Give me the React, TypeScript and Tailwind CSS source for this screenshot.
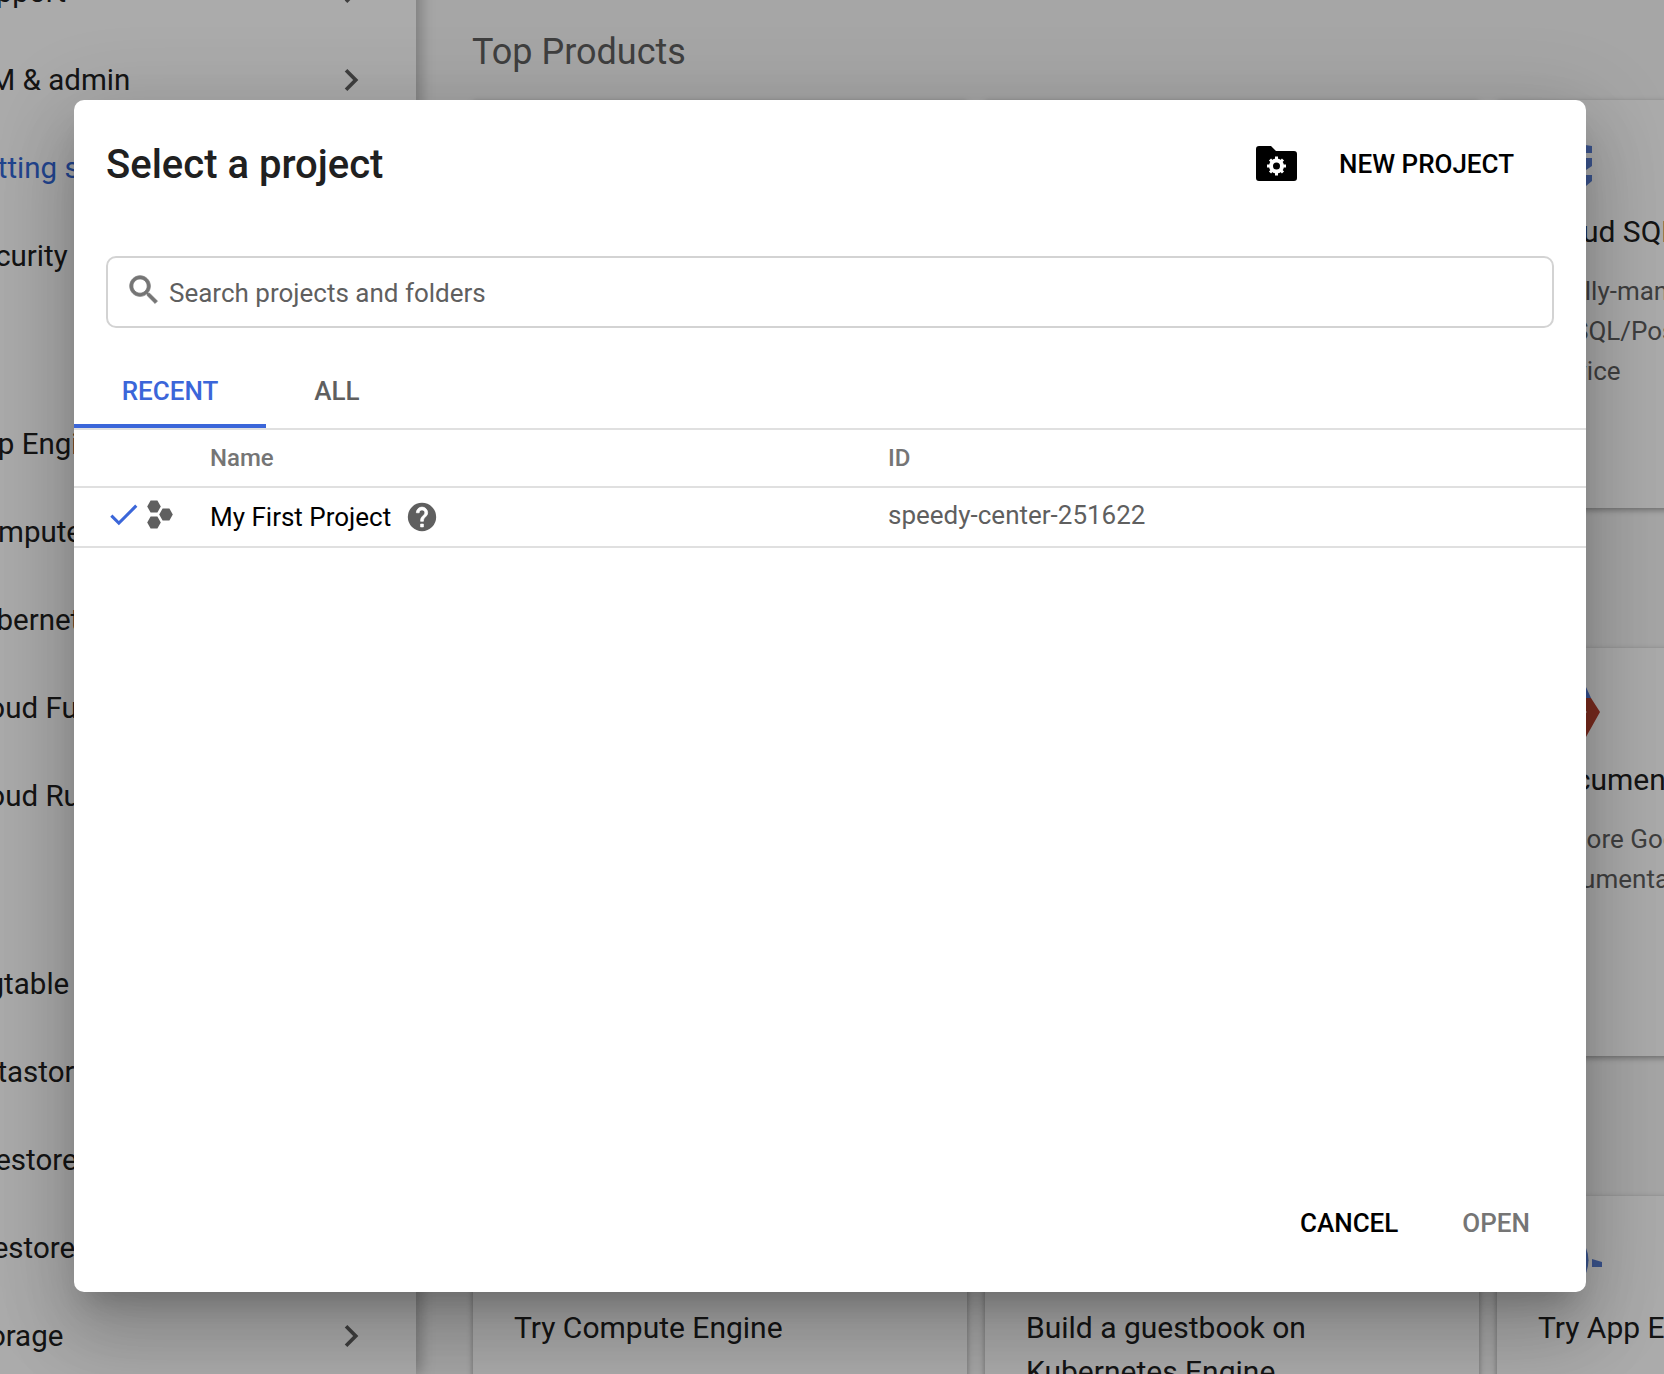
type Item = { label: string; active?: boolean; chevron?: boolean };

const sections: Item[][] = [
  [
    { label: "Support", chevron: true },
    { label: "IAM & admin", chevron: true },
    { label: "Getting started", active: true },
    { label: "Security", chevron: true },
  ],
  [
    { label: "App Engine", chevron: true },
    { label: "Compute Engine", chevron: true },
    { label: "Kubernetes Engine", chevron: true },
    { label: "Cloud Functions" },
    { label: "Cloud Run" },
  ],
  [
    { label: "Bigtable" },
    { label: "Datastore", chevron: true },
    { label: "Firestore", chevron: true },
    { label: "Filestore" },
    { label: "Storage", chevron: true },
  ],
];

function Chevron() {
  return (
    <svg viewBox="0 0 24 24" className="w-[44px] h-[44px] -mt-[1px] fill-[#5f5f5f]">
      <path d="M10 6L8.59 7.41 13.17 12l-4.58 4.59L10 18l6-6z" />
    </svg>
  );
}

function SqlIcon() {
  return (
    <svg viewBox="0 0 54 44" className="w-[54px] h-[44px]">
      <path d="M0 8L27 0l27 4v7H0z" fill="#5a7fd6" />
      <path d="M0 16h54v8l-6 4H0z" fill="#5a7fd6" />
      <path d="M0 33h54v6l-6 5H0z" fill="#5a7fd6" />
    </svg>
  );
}

function DocsIcon() {
  return (
    <svg viewBox="0 0 62 50" className="w-[62px] h-[50px]">
      <path d="M40 11L48 0l5 11z" fill="#4f78d8" />
      <path d="M40 11h13l9 14-14 25-8-12 6-13z" fill="#b8402f" />
      <path d="M46 22l3 3-3 3z" fill="#e6e6e6" />
    </svg>
  );
}

function AppIcon() {
  return (
    <svg viewBox="0 0 64 50" className="w-[64px] h-[50px]">
      <path d="M46 13h2q5 12 0 25h-2z" fill="#5a7fd6" />
      <path d="M54 24l10 3v5H54z" fill="#5a7fd6" />
    </svg>
  );
}

function Hexagons() {
  return (
    <svg viewBox="0 0 26 29" className="w-[26px] h-[29px] fill-[#5f5f5f]">
      <polygon points="0.2,6.5 3.6,0.6 10.4,0.6 13.8,6.5 10.4,12.4 3.6,12.4" />
      <polygon points="0.2,22.5 3.6,16.6 10.4,16.6 13.8,22.5 10.4,28.4 3.6,28.4" />
      <polygon points="12.2,14.5 15.6,8.6 22.4,8.6 25.8,14.5 22.4,20.4 15.6,20.4" />
    </svg>
  );
}

function Card({ icon, title, lines }: { icon?: React.ReactNode; title?: string; lines?: string[] }) {
  return (
    <div className="h-full bg-white shadow-[0_2px_6px_rgba(0,0,0,0.35)] px-[41px] pt-[36px]">
      <div className="h-[56px] flex items-center">{icon}</div>
      {title && <div className="mt-[18px] text-[30px] leading-[44px] text-[#202020]">{title}</div>}
      {lines && (
        <div className="mt-[17px] text-[26px] leading-[40px] text-[#5f5f5f]">
          {lines.map((l) => (
            <div key={l}>{l}</div>
          ))}
        </div>
      )}
    </div>
  );
}

export default function App() {
  return (
    <div className="relative h-[1374px] w-[1664px] overflow-hidden bg-white font-['Roboto',sans-serif]">
      <div className="flex h-full">
        <aside className="relative z-10 w-[416px] shrink-0 bg-white shadow-[4px_0_14px_rgba(0,0,0,0.28)] -mt-[52px]">
          {sections.map((items, i) => (
            <div key={i} className={i > 0 ? "mt-[100px]" : ""}>
              {items.map((item) => (
                <div key={item.label} className="h-[88px] flex items-center justify-between -ml-[38px] pr-[43px]">
                  <span
                    className={
                      item.active
                        ? "text-[29.5px] whitespace-nowrap text-[#3367d6]"
                        : "text-[29.5px] whitespace-nowrap text-[#202020]"
                    }
                  >
                    {item.label}
                  </span>
                  {item.chevron && <Chevron />}
                </div>
              ))}
            </div>
          ))}
        </aside>

        <main className="flex-1 min-w-0 bg-[#f8f8f8] pl-[57px]">
          <h2 className="h-[100px] flex items-center pt-[4px] -ml-[1px] text-[36px] text-[#5f5f5f]">Top Products</h2>
          <div className="grid grid-cols-[494px_494px_494px] gap-x-[18px] gap-y-[140px] auto-rows-[408px]">
            <Card title="Compute Engine" />
            <Card title="Kubernetes Engine" />
            <Card icon={<SqlIcon />} title="Cloud SQL" lines={["A fully-managed", "MySQL/PostgreSQL", "service"]} />
            <Card />
            <Card />
            <Card icon={<DocsIcon />} title="Documentation" lines={["Explore Google Cloud", "documentation"]} />
            <Card title="Try Compute Engine" />
            <Card title="Build a guestbook on Kubernetes Engine" />
            <Card icon={<AppIcon />} title="Try App Engine" />
          </div>
        </main>
      </div>

      {/* backdrop + dialog */}
      <div className="absolute inset-0 z-20 bg-black/[0.33] pt-[100px] pl-[74px]">
        <div className="flex h-[1192px] w-[1512px] flex-col rounded-[10px] bg-white shadow-[0_44px_70px_6px_rgba(0,0,0,0.14),0_17px_85px_15px_rgba(0,0,0,0.12),0_20px_28px_-13px_rgba(0,0,0,0.2)]">
          <div className="flex h-[129px] items-center justify-between pl-[32px] pr-[72px]">
            <h1 className="text-[40px] font-medium text-[#202020]">Select a project</h1>
            <div className="flex items-center gap-[42px]">
              <svg viewBox="0 0 41 35" className="w-[41px] h-[35px] -mt-[2px]">
                <path d="M3 0h12l5 5h18a3 3 0 0 1 3 3v24a3 3 0 0 1-3 3H3a3 3 0 0 1-3-3V3a3 3 0 0 1 3-3z" fill="#000" />
                <circle cx="20.5" cy="20" r="5.5" fill="none" stroke="#fff" strokeWidth="4" />
                <path d="M20.5 10.5v3M20.5 26.5v3M11 20h3M27 20h3M14 13.500l2 2M25 24.500l2 2M27 13.500l-2 2M16 24.500l-2 2" stroke="#fff" strokeWidth="3" />
              </svg>
              <span className="text-[26px] font-medium text-black">NEW PROJECT</span>
            </div>
          </div>

          <div className="mx-[32px] mt-[27px] flex h-[72px] items-center gap-[6px] rounded-[10px] border-2 border-[#d3d3d3] pl-[17px]">
            <svg viewBox="0 0 24 24" className="w-[38px] h-[38px] fill-[#757575] -mt-[4px]">
              <path d="M15.5 14h-.79l-.28-.27C15.41 12.59 16 11.11 16 9.500 16 5.910 13.090 3 9.500 3S3 5.910 3 9.500 5.910 16 9.500 16c1.610 0 3.090-.590 4.230-1.570l.270.280v.790l5 4.990L20.490 19l-4.990-5zm-6 0C7.010 14 5 11.990 5 9.500S7.010 5 9.500 5 14 7.010 14 9.500 11.990 14 9.500 14z" stroke="#757575" strokeWidth="0.5" />
            </svg>
            <span className="pt-[2px] text-[26px] text-[#5f5f5f]">Search projects and folders</span>
          </div>

          <div className="mt-[26px] flex h-[76px] border-b-2 border-[#e0e0e0] text-[26px] font-medium">
            <div className="flex h-[74px] w-[192px] items-center justify-center border-b-4 border-[#3b66d9] pt-[4px] text-[#3b66d9]">
              RECENT
            </div>
            <div className="flex h-[74px] w-[142px] items-center justify-center border-b-4 border-transparent pt-[4px] text-[#5f5f5f]">
              ALL
            </div>
          </div>

          <div className="flex h-[58px] items-center border-b-2 border-[#e0e0e0] pb-[1px] text-[24px] font-medium text-[#757575]">
            <div className="w-[814px] pl-[136px]">Name</div>
            <div>ID</div>
          </div>

          <div className="flex h-[60px] items-center border-b-2 border-[#e0e0e0]">
            <div className="flex w-[814px] items-center">
              <div className="flex w-[136px] items-center pl-[31px]">
                <svg viewBox="0 0 24 24" className="w-[37px] h-[37px] fill-[#3b66d9] -mt-[6px]">
                  <path d="M9 16.170L4.830 12l-1.420 1.410L9 19 21 7l-1.410-1.410z" />
                </svg>
                <div className="-mt-[6px] ml-[5px]">
                  <Hexagons />
                </div>
              </div>
              <span className="text-[26px] text-black">My First Project</span>
              <svg viewBox="0 0 24 24" className="ml-[14px] w-[34px] h-[34px]">
                <circle cx="12" cy="12" r="10" fill="#5f5f5f" />
                <path
                  d="M11 19h2v-2h-2zM15.070 11.250l-.9.920C13.450 12.900 13 13.500 13 15h-2v-.5c0-1.100.450-2.100 1.170-2.830l1.240-1.260c.370-.360.590-.860.590-1.410 0-1.100-.9-2-2-2s-2 .9-2 2H8c0-2.210 1.790-4 4-4s4 1.790 4 4c0 .880-.360 1.680-.930 2.250z"
                  fill="#fff"
                  stroke="#fff"
                  strokeWidth="0.5"
                />
              </svg>
            </div>
            <span className="pb-[3px] text-[26px] text-[#5f5f5f]">speedy-center-251622</span>
          </div>

          <div className="mt-auto flex h-[138px] items-center justify-end gap-[64px] pr-[56px] text-[26px] font-medium">
            <span className="text-black">CANCEL</span>
            <span className="text-[#757575]">OPEN</span>
          </div>
        </div>
      </div>
    </div>
  );
}
